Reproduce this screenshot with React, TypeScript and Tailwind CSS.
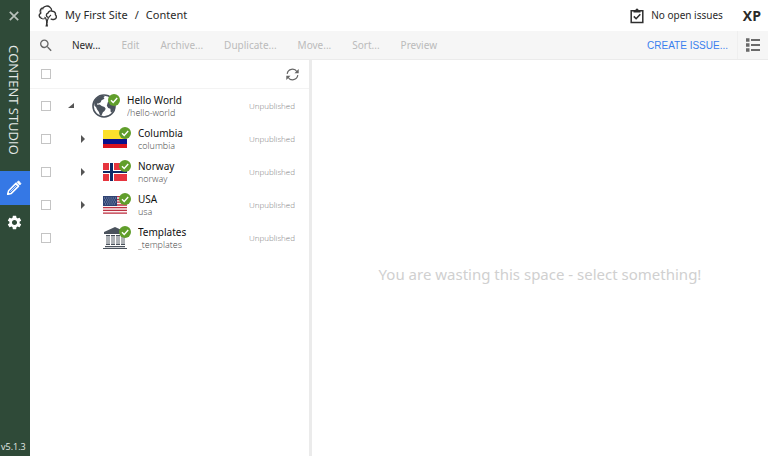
import React, { ReactNode } from 'react'
import clsx from 'clsx'
import { MdSettings, MdSearch } from 'react-icons/md'

interface Item {
  name: string
  path: string
  icon: ReactNode
  root?: boolean
  arrow?: 'open' | 'closed'
}

const actions = ['New...', 'Edit', 'Archive...', 'Duplicate...', 'Move...', 'Sort...', 'Preview']

function TreeLogo() {
  return (
    <svg width="20" height="22" viewBox="0 0 20 22" fill="none" stroke="#333">
      <path d="M3.200 13.200C.6 12.200.6 9.400 2.600 8.300 1.200 5.400 3 3.200 5 3 6.500.8 10 .4 12 2.200c1.400 1 1.800 2.200 1.600 3.600" strokeWidth="1.400" />
      <path d="M3.400 8c-.6-2 .6-4 2.600-4.200M2.200 11c.4 1 1.200 1.400 2 1.400" strokeWidth=".6" stroke="#777" />
      <path d="M10.200 12.400C7.800 11.600 7.800 8.800 9.900 8.200c.6-2 2.800-2.900 4.600-1.900 2.200.1 3.400 1.900 2.900 3.500 1.800 1.500 1 4.100-1.100 4.500-1.400.4-2.600.2-3.600-.5" strokeWidth="1.400" />
      <path d="M3 13.300c1.300.8 3.400.8 4.600-.3" strokeWidth="1" />
      <path d="M9 18c.2-3.500 1.500-6 4-8M8.500 15C8 13.500 7.500 12.500 6.500 12" strokeWidth="1.100" />
      <path d="M7.400 21.400c.9-2.200.8-4.800.2-7.400l1.600 1.400c.5 2 .3 4 .8 6z" fill="#333" stroke="none" />
    </svg>
  )
}

function PencilIcon() {
  return (
    <svg width="16" height="16" viewBox="0 0 16 16" fill="none" stroke="#fff" strokeLinejoin="round">
      <path d="M1.700 14.300l.9-3.600 7.300-7.300 2.700 2.700-7.300 7.300z" strokeWidth="1.500" />
      <path d="M4.300 11.700l6.500-6.500" strokeWidth=".7" />
      <path d="M11 2.300l.8-.8c.4-.4.9-.4 1.300 0l1.400 1.400c.4.400.4.9 0 1.300l-.8.8z" fill="#fff" strokeWidth="1" />
      <path d="M1 15l.6-2.500 1.900 1.900z" fill="#fff" stroke="none" />
    </svg>
  )
}

function ClipboardIcon() {
  return (
    <svg width="14" height="16" viewBox="0 0 14 16" fill="none" stroke="#2e2e2e">
      <path d="M1.200 2.800h11.600v11.600H1.200z" strokeWidth="1.500" />
      <path d="M3.500 2h2a1.500 1.500 0 0 1 3 0h2v2.400h-7z" fill="#2e2e2e" stroke="none" />
      <path d="M3.800 8.400l2.300 2.300 4.200-4.500" strokeWidth="1.600" />
    </svg>
  )
}

function ListIcon() {
  return (
    <svg width="14" height="14" viewBox="0 0 14 14" fill="#6a6a6a">
      <path d="M0 .3h3.500v3.500H0zM0 5.300h3.500v3.500H0zM0 10.300h3.500v3.500H0z" />
      <path d="M5 1h9v2H5zM5 6h9v2H5zM5 11h9v2H5z" />
    </svg>
  )
}

function RefreshIcon() {
  return (
    <svg width="13" height="13" viewBox="0 0 13 13" fill="none" stroke="#666" strokeWidth="1.200">
      <path d="M1.200 5.800A5.300 5.300 0 0 1 11 3.800M11.800 7.200A5.300 5.300 0 0 1 2 9.200" />
      <path d="M12.700 1v4.200H8.500zM.3 12V7.800h4.200z" fill="#666" stroke="none" />
    </svg>
  )
}

function GlobeIcon() {
  return (
    <svg width="24" height="24" viewBox="0 0 24 24">
      <circle cx="12" cy="12" r="11" fill="#fff" stroke="#4a525c" strokeWidth="1.600" />
      <path d="M2 8.500C3.500 4.500 7 1.800 10.800 1.400l2 1.100-1.300 1.300 1 1-3 1.400-.8 2-2.200 1.200-1.500.2.200 1.200 2.500-.2 2 1.500 2.800.8 1.200 1.800-1.200 2.400-1.600 1.200-1.400 3.200-1.600-.2-1-3.200-1.800-2.600-1.100-2.400-1.400-1.200z" fill="#4a525c" />
      <path d="M15.800 8.300l1.700-1.800h3l2 4.500-.2 4-2.300 3.600-1.300-.5-.3-3.300-2.200-.8-1.400-2.300z" fill="#4a525c" />
    </svg>
  )
}

function ColombiaFlag() {
  return (
    <svg width="24" height="18" viewBox="0 0 24 18">
      <path d="M0 0h24v9H0z" fill="#fce02c" />
      <path d="M0 9h24v5H0z" fill="#08108c" />
      <path d="M0 14h24v4H0z" fill="#d8121e" />
    </svg>
  )
}

function NorwayFlag() {
  return (
    <svg width="24" height="18" viewBox="0 0 24 18">
      <path d="M0 0h24v18H0z" fill="#e6343e" />
      <path d="M6 0h5v18H6zM0 7h24v4H0z" fill="#fff" />
      <path d="M7 0h3v18H7zM0 8h24v2H0z" fill="#0d2a66" />
    </svg>
  )
}

function UsaFlag() {
  return (
    <svg width="24" height="18" viewBox="0 0 24 18">
      <path d="M0 0h24v18H0z" fill="#fbf1f1" />
      <path d="M0 .7h24M0 3.500h24M0 6.200h24M0 9h24M0 11.600h24M0 14.300h24M0 17.200h24" stroke="#bd3142" strokeWidth="1.300" />
      <path d="M0 0h14v10H0z" fill="#2f4373" />
      <path d="M1 2h12M2 4h11M1 6h12M2 8h11" stroke="#a9b4cc" strokeWidth=".8" strokeDasharray="1 1.200" />
    </svg>
  )
}

function TemplatesIcon() {
  return (
    <svg width="24" height="22" viewBox="0 0 24 22" fill="#4a525c">
      <path d="M12 0l11 5v2H1V5zM2 19h20v1.200H2zM0 21h24v1H0z" />
      <path d="M3 8h4v1H3zM8 8h4v1H8zM13 8h4v1h-4zM18 8h4v1h-4zM3 17h4v1H3zM8 17h4v1H8zM13 17h4v1h-4zM18 17h4v1h-4z" />
      <path d="M4 9v8M6 9v8M9 9v8M11 9v8M14 9v8M16 9v8M19 9v8M21 9v8" stroke="#4a525c" strokeWidth=".9" />
    </svg>
  )
}

function CheckBadge() {
  return (
    <svg width="12" height="12" viewBox="0 0 12 12" className="absolute -right-1 top-0">
      <circle cx="6" cy="6" r="6" fill="#609e2b" />
      <path d="M3 6.200l2.200 2.200L9.200 4" fill="none" stroke="#fff" strokeWidth="1.400" />
    </svg>
  )
}

const items: Item[] = [
  { name: 'Hello World', path: '/hello-world', icon: <GlobeIcon />, root: true, arrow: 'open' },
  { name: 'Columbia', path: 'columbia', icon: <ColombiaFlag />, arrow: 'closed' },
  { name: 'Norway', path: 'norway', icon: <NorwayFlag />, arrow: 'closed' },
  { name: 'USA', path: 'usa', icon: <UsaFlag />, arrow: 'closed' },
  { name: 'Templates', path: '_templates', icon: <TemplatesIcon /> },
]

function Checkbox({ label }: { label: string }) {
  return (
    <input
      type="checkbox"
      aria-label={label}
      className="size-[10px] shrink-0 appearance-none border border-[#c4c4c4] bg-white checked:bg-[#2f76e8]"
    />
  )
}

function Row({ item }: { item: Item }) {
  return (
    <li className="flex h-[33px] items-center pl-[11px] pr-[14px]">
      <Checkbox label={item.name} />
      <button
        aria-label={`Toggle ${item.name}`}
        className={clsx('flex h-4 w-2 shrink-0 items-center justify-center', item.root ? 'ml-4' : 'ml-7', !item.arrow && 'invisible')}
      >
        <svg width="6" height="8" viewBox="0 0 6 8" fill="#555">
          {item.arrow === 'open' ? <path d="M6 1v5H0z" /> : <path d="M1 0l4 4-4 4z" />}
        </svg>
      </button>
      <div className={clsx('relative flex h-6 w-6 shrink-0 items-center justify-center', item.root ? 'ml-[17px]' : 'ml-4')}>
        {item.icon}
        <CheckBadge />
      </div>
      <div className="ml-[11px] min-w-0 flex-1">
        <div className="truncate text-[10px] leading-[14px] text-[#111]">{item.name}</div>
        <div className="truncate font-['Open_Sans',sans-serif] text-[9px] font-light leading-[12px] text-[#444]">{item.path}</div>
      </div>
      <span className="font-['Open_Sans',sans-serif] text-[8px] font-light leading-3 text-[#808080]">Unpublished</span>
    </li>
  )
}

export default function App() {
  return (
    <div className="flex h-screen bg-white font-['Noto_Sans',sans-serif]">
      <nav className="flex w-[30px] shrink-0 flex-col items-center bg-[#2f4a38] font-['Open_Sans',sans-serif] text-white">
        <button aria-label="Close" className="flex h-[31px] w-full items-center justify-center pr-[2px]">
          <svg width="10" height="10" viewBox="0 0 10 10" stroke="#b9c2bc" strokeWidth="1.700">
            <path d="M.8.8l8.400 8.400M9.200.8L.8 9.200" />
          </svg>
        </button>
        <div className="flex h-[140px] w-full items-start justify-center pr-[2px] pt-[14px]">
          <span className="text-[13px] leading-4 text-[#e4e9e6] [writing-mode:vertical-rl]">CONTENT STUDIO</span>
        </div>
        <button aria-label="Content" className="flex h-[34px] w-full items-center justify-center bg-[#3578e5] pr-[2px]">
          <PencilIcon />
        </button>
        <button aria-label="Settings" className="flex h-[34px] w-full items-center justify-center pr-[2px]">
          <MdSettings size={17} />
        </button>
        <span className="mt-auto w-full pb-[3px] pl-px text-[9px] leading-3 text-[#e4e9e6]">v5.1.3</span>
      </nav>

      <div className="flex min-w-0 flex-1 flex-col">
        <header className="flex h-[31px] shrink-0 items-center pl-2 pr-[7px] text-[#2a2a2a]">
          <TreeLogo />
          <div className="ml-[7px] flex gap-[7px] text-[11px]">
            <a href="#site">My First Site</a>
            <span>/</span>
            <span>Content</span>
          </div>
          <button className="ml-auto flex items-center gap-[7px] text-[10px]">
            <ClipboardIcon />
            No open issues
          </button>
          <b className="ml-5 font-['Open_Sans',sans-serif] text-[14px] font-bold">XP</b>
        </header>

        <div className="flex h-[29px] shrink-0 items-center border-b border-[#ebebeb] bg-[#f6f6f6]">
          <button aria-label="Search" className="ml-2 flex w-4 justify-center text-[#666]">
            <MdSearch size={17} />
          </button>
          <div className="ml-[18px] flex gap-[21px] text-[10px]">
            {actions.map((action, i) => (
              <button key={action} disabled={i > 0} className="text-[#2a2a2a] disabled:text-[#bbb]">
                {action}
              </button>
            ))}
          </div>
          <button className="ml-auto font-['Liberation_Sans',sans-serif] text-[10px] text-[#3a80ee]">CREATE ISSUE...</button>
          <button aria-label="Details" className="ml-[9px] flex h-full w-[31px] items-center justify-center border-l border-[#efefef]">
            <ListIcon />
          </button>
        </div>

        <div className="flex min-h-0 flex-1">
          <section className="w-[282px] shrink-0 border-r-3 border-[#ebebeb]">
            <div className="flex h-[29px] items-center justify-between border-b border-[#f3f3f3] pl-[11px] pr-[10px]">
              <Checkbox label="Select all" />
              <button aria-label="Refresh">
                <RefreshIcon />
              </button>
            </div>
            <ul>
              {items.map((item) => (
                <Row key={item.name} item={item} />
              ))}
            </ul>
          </section>
          <main className="flex flex-1 items-center justify-center pt-8 text-[15px] text-[#d0d0d0]">
            You are wasting this space - select something!
          </main>
        </div>
      </div>
    </div>
  )
}
